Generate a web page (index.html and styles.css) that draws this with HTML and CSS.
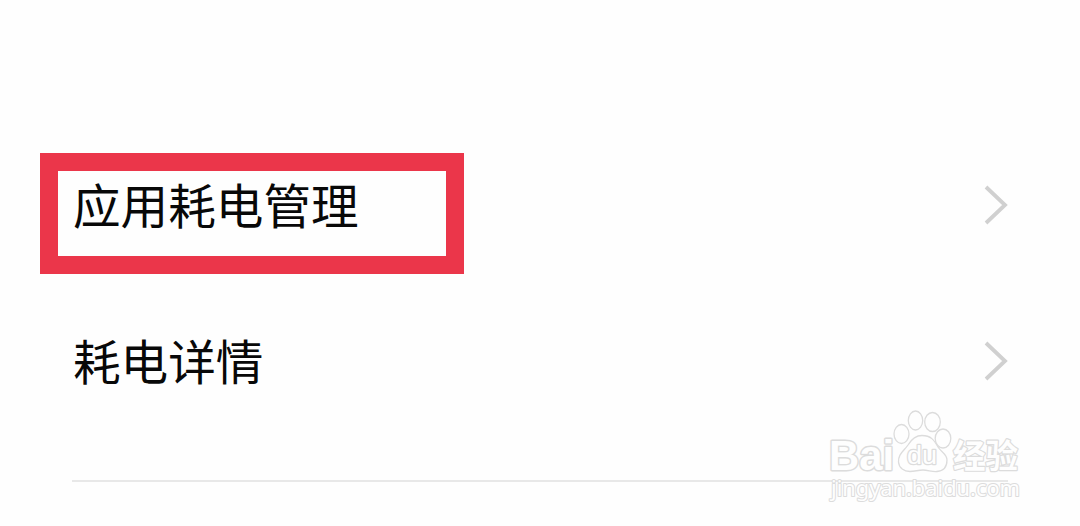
FILE: index.html
```
<!DOCTYPE html>
<html lang="zh-CN">
  <head>
    <meta charset="UTF-8" />
    <meta name="viewport" content="width=device-width, initial-scale=1.0" />
    <title>耗电管理</title>
    <link rel="stylesheet" href="styles.css">
  </head>
  <body>
    <div class="list">
      <div class="list-item">
        <span class="label">应用耗电管理</span>
        <svg class="arrow" width="26" height="42" viewBox="0 0 26 42">
          <path d="M3 3 L22 21 L3 39" />
        </svg>
        <div class="highlight"></div>
      </div>
      <div class="list-item">
        <span class="label">耗电详情</span>
        <svg class="arrow" width="26" height="42" viewBox="0 0 26 42">
          <path d="M3 3 L22 21 L3 39" />
        </svg>
      </div>
    </div>

    <!-- 水印 -->
    <svg class="watermark" width="210" height="106" viewBox="820 400 210 106">
      <text class="brand" x="829" y="470" textLength="65" lengthAdjust="spacingAndGlyphs">Bai</text>
      <ellipse cx="901.5" cy="434" rx="7.5" ry="9.5" />
      <ellipse cx="915.5" cy="420.5" rx="7.2" ry="9.5" />
      <ellipse cx="932.5" cy="422" rx="7.8" ry="9.5" />
      <ellipse cx="943" cy="438.5" rx="7.8" ry="9.5" />
      <path d="M922 435.500 C915 435.500 911 440 908 445 C904 451 898 454 898.500 462 C899 468 904 471.500 910 471.500 C915 471.500 918 470 923 470 C928 470 932 472 937 471.500 C943 471 947 467 947 460 C947 454 941 452 938 447 C934 440 931 435.500 922 435.500 Z" />
      <text class="du" x="907" y="464" textLength="30" lengthAdjust="spacingAndGlyphs">du</text>
      <text class="jingyan" x="953" y="467.5" textLength="65" lengthAdjust="spacingAndGlyphs">经验</text>
      <text class="site" x="831" y="496" textLength="189" lengthAdjust="spacingAndGlyphs">jingyan.baidu.com</text>
    </svg>
  </body>
</html>
```
FILE: styles.css
```
body {
  margin: 0;
  background-color: #fefefe;
  position: relative;
  height: 526px;
  overflow: hidden;
  font-family: "Noto Sans CJK SC", sans-serif;
}

/* 列表 */
.list {
  margin: 0 72px;
  padding-top: 127px;
  height: 353px;
  border-bottom: 2px solid #e8e8e8;
}

.list-item {
  position: relative;
  display: flex;
  justify-content: space-between;
  align-items: center;
  height: 156px;
}

.label {
  font-size: 47.6px;
  line-height: 70px;
  margin: -2px 0 0 1px;
  color: #080808;
}

.arrow {
  margin-right: -1px;
}

.arrow path {
  fill: none;
  stroke: #d0d0d0;
  stroke-width: 3.8;
}

/* 红色标注框 */
.highlight {
  position: absolute;
  left: -32px;
  top: 26px;
  width: 388px;
  height: 85px;
  border: 18px solid #eb364a;
}

/* 水印样式 */
.watermark {
  position: absolute;
  left: 820px;
  top: 400px;
}

.watermark text,
.watermark ellipse,
.watermark path {
  fill: #fefefe;
  stroke: #dcdcdc;
  stroke-width: 1.3;
  stroke-linejoin: round;
}

.watermark text {
  paint-order: stroke;
  stroke-width: 2.4;
}

.watermark .brand {
  font: bold 43px "Liberation Sans", sans-serif;
  stroke-width: 3;
}

.watermark .du {
  font: 25px "Liberation Sans", sans-serif;
}

.watermark .jingyan {
  font: 700 33px/1 "Noto Sans CJK SC", sans-serif;
}

.watermark .site {
  font: 21px/1 "Noto Sans", sans-serif;
  stroke-width: 2;
}
```
